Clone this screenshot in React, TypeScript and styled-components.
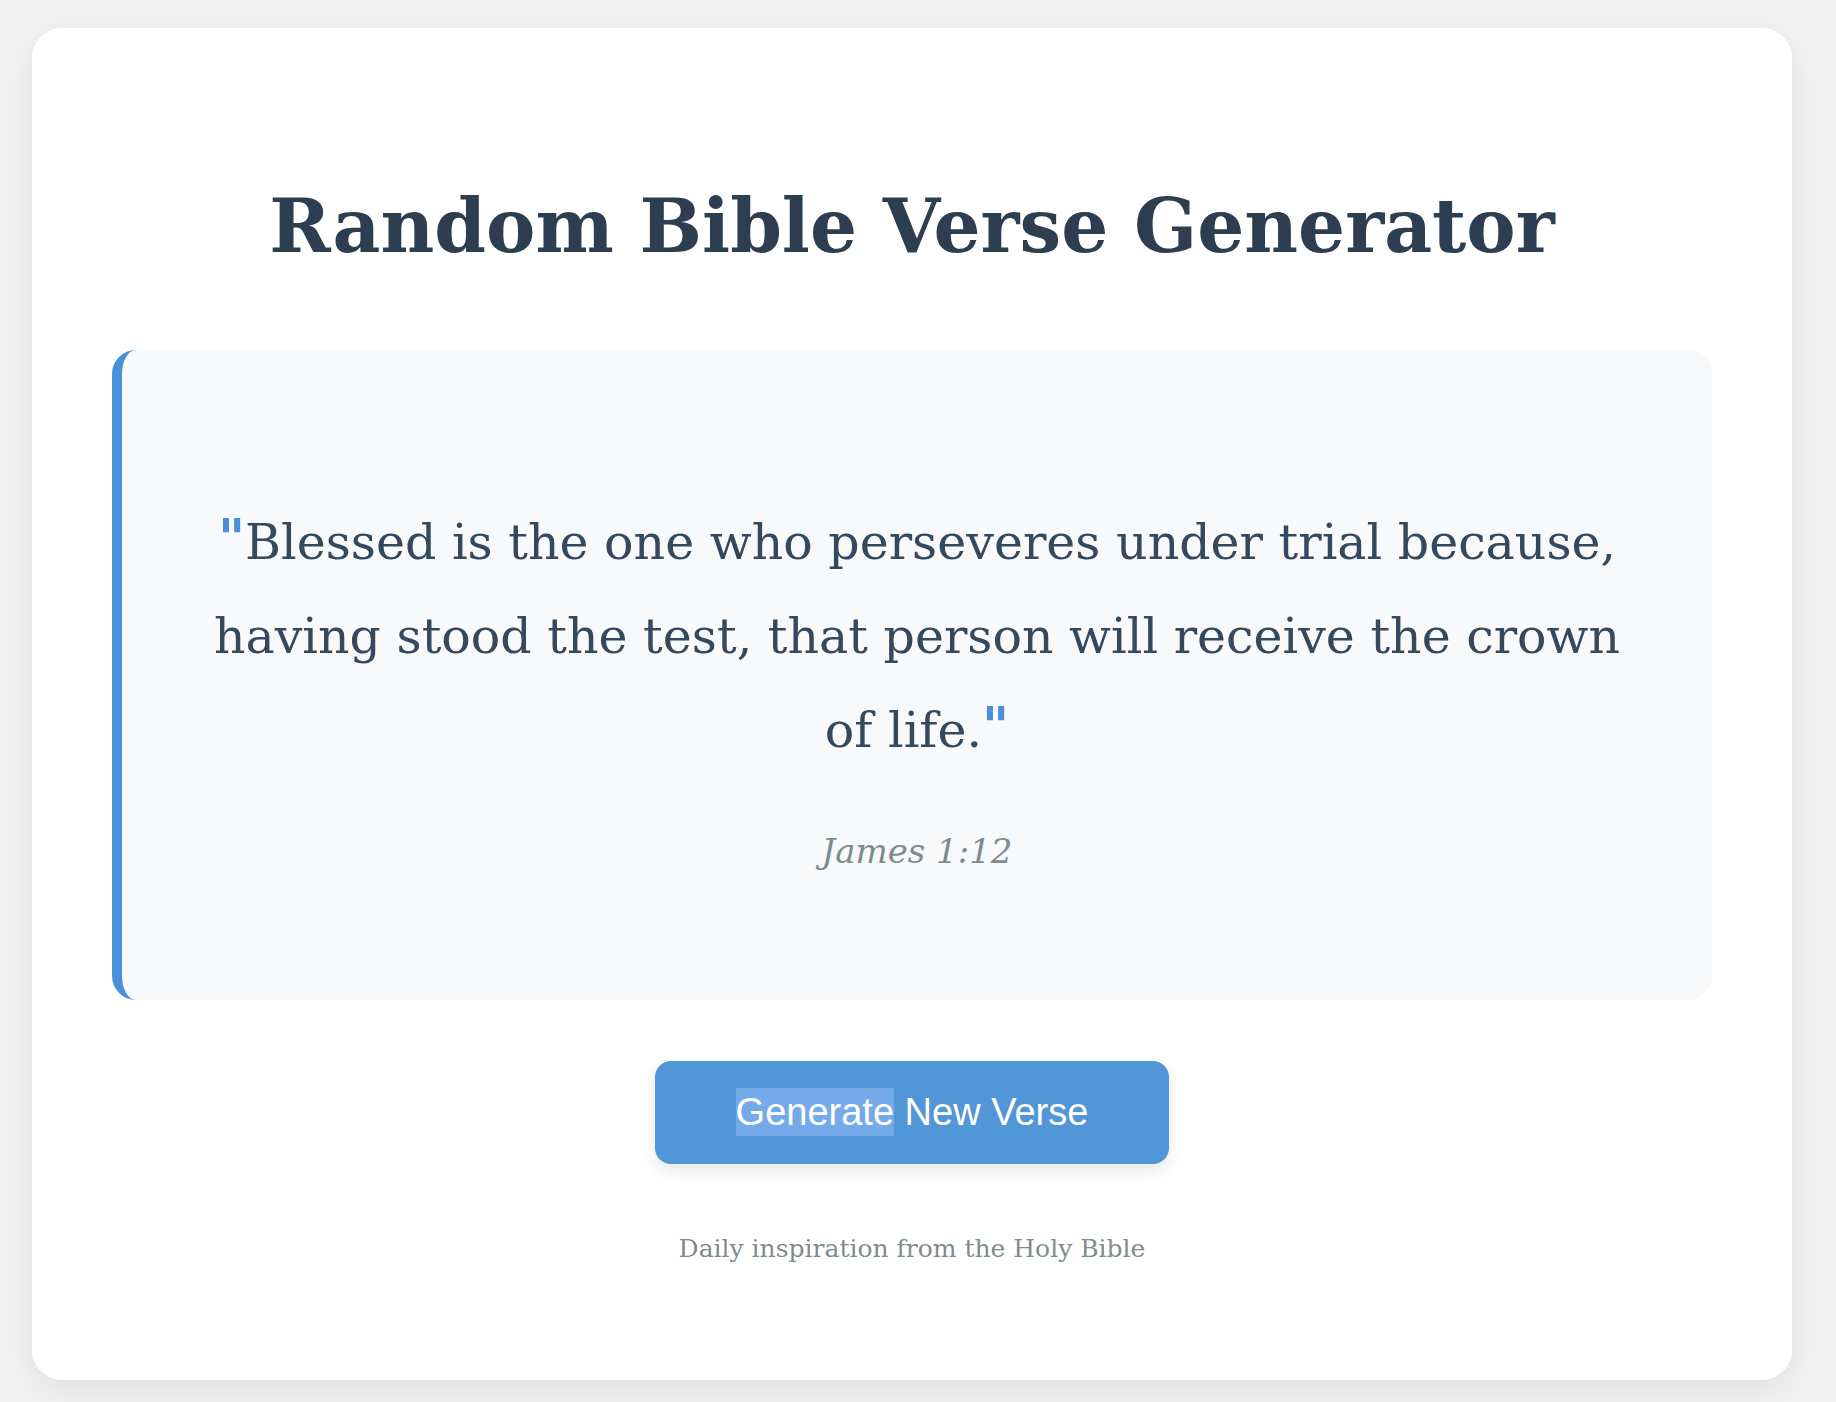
import styled, { createGlobalStyle } from 'styled-components';

const GlobalStyle = createGlobalStyle`
  html, body {
    margin: 0;
    padding: 0;
    background: #f2f2f2;
  }
  body {
    font-family: 'DejaVu Serif', Georgia, serif;
  }
`;

const verse = {
  text: 'Blessed is the one who perseveres under trial because, having stood the test, that person will receive the crown of life.',
  reference: 'James 1:12'
};

const App = () => {
  return (
    <>
      <GlobalStyle />
      <Page>
        <Card>
          <Title>Random Bible Verse Generator</Title>
          <VerseBox>
            <VerseText>
              <QuoteMark>"</QuoteMark>
              {verse.text}
              <QuoteMark>"</QuoteMark>
            </VerseText>
            <Reference>{verse.reference}</Reference>
          </VerseBox>
          <GenerateButton>
            <Selected>Generate</Selected> New Verse
          </GenerateButton>
          <Footer>Daily inspiration from the Holy Bible</Footer>
        </Card>
      </Page>
    </>
  );
};

export default App;

const Page = styled.div`
  box-sizing: border-box;
  min-height: 1402px;
  padding: 28px 44px 22px 32px;
`;

const Card = styled.main`
  box-sizing: border-box;
  height: 1352px;
  padding: 0 80px;
  background: #ffffff;
  border-radius: 30px;
  box-shadow: 0 10px 40px rgba(0, 0, 0, 0.08);
  display: flex;
  flex-direction: column;
  align-items: center;
`;

const Title = styled.h1`
  margin: 161px 0 0;
  font-size: 74px;
  line-height: 74px;
  font-weight: 700;
  color: #2c3e50;
  text-align: center;
`;

const VerseBox = styled.section`
  box-sizing: border-box;
  align-self: stretch;
  height: 650px;
  margin-top: 87px;
  padding: 146px 70px 0;
  background: #f8f9fa;
  border-left: 10px solid #4a90d9;
  border-radius: 24px;
  text-align: center;
`;

const VerseText = styled.p`
  margin: 0;
  font-size: 49px;
  line-height: 94px;
  color: #34495e;
`;

const QuoteMark = styled.span`
  color: #4a90d9;
  font-size: 52px;
  font-weight: 700;
  line-height: 0;
  vertical-align: 3px;
`;

const Reference = styled.p`
  margin: 53px 0 0;
  font-size: 34px;
  font-style: italic;
  color: #7f8c8d;
`;

const GenerateButton = styled.button`
  margin-top: 61px;
  width: 514px;
  height: 103px;
  border: none;
  border-radius: 16px;
  background: #5196d6;
  color: #ffffff;
  font-family: 'Liberation Sans', Arial, sans-serif;
  font-size: 38px;
  cursor: pointer;
  box-shadow: 0 6px 16px rgba(0, 0, 0, 0.1);
`;

const Selected = styled.span`
  background: #75aaea;
  padding: 3px 0;
`;

const Footer = styled.p`
  margin: 70px 0 0;
  font-size: 25px;
  color: #7f8c8d;
`;
